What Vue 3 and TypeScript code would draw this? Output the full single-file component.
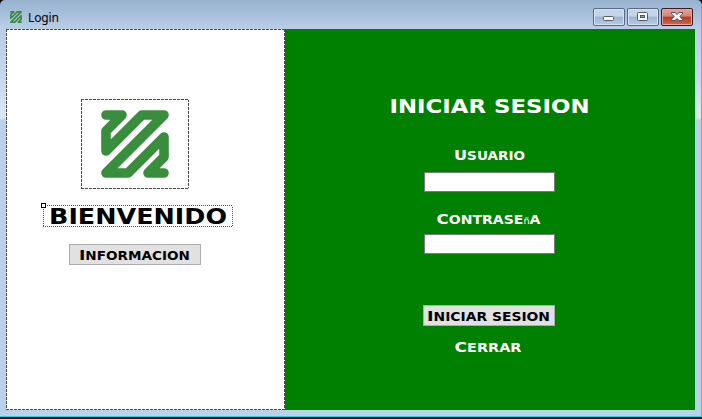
<script setup lang="ts">
import { ref } from 'vue'

const user = ref('')
const password = ref('')
</script>

<template>
  <div class="window">
    <header class="titlebar">
      <svg class="app-icon" width="12" height="12" viewBox="0 0 68 68">
        <path class="logo-line" d="M5 5H21L5 21V41L41 5H63L5 63H27L63 27V47L47 63H63" />
      </svg>
      <span class="title">Login</span>
      <div class="controls">
        <button class="control" aria-label="Minimizar">
          <svg width="30" height="17" viewBox="0 0 30 17">
            <rect x="9.5" y="7.5" width="10" height="4" rx="1" fill="#f8f8f8" stroke="#555c68" />
          </svg>
        </button>
        <button class="control" aria-label="Maximizar">
          <svg width="30" height="17" viewBox="0 0 30 17">
            <rect x="9.5" y="3.5" width="10" height="8" rx="1" fill="#f8f8f8" stroke="#555c68" />
            <rect x="12.5" y="6.5" width="4" height="2" fill="#79a5c9" stroke="#555c68" />
          </svg>
        </button>
        <button class="control close" aria-label="Cerrar ventana">
          <svg width="30" height="17" viewBox="0 0 30 17">
            <path
              d="M9.5 3.5h3.6l1.9 2 1.9-2h3.6v1.4l-2.8 2.6 2.8 2.7v1.3h-3.6l-1.9-2-1.9 2H9.5v-1.3l2.8-2.7-2.8-2.6z"
              fill="#fafafa"
              stroke="#624b55"
            />
          </svg>
        </button>
      </div>
    </header>

    <main class="client">
      <section class="welcome dashed">
        <div class="picture dashed">
          <svg width="68" height="68" viewBox="0 0 68 68">
            <path class="logo-line" d="M5 5H21L5 21V41L41 5H63L5 63H27L63 27V47L47 63H63" />
          </svg>
        </div>
        <div class="welcome-label">
          <i class="handle"></i>
          <svg class="lettering" width="180" height="20">
            <text x="1" y="17.5" font-size="22" textLength="178" lengthAdjust="spacingAndGlyphs">BIENVENIDO</text>
          </svg>
        </div>
        <button class="btn info">
          <svg class="lettering" width="112" height="17">
            <text x="0" y="13" font-size="14.5" textLength="111" lengthAdjust="spacingAndGlyphs">I<tspan class="small">nformacion</tspan></text>
          </svg>
        </button>
      </section>

      <form class="login" @submit.prevent>
        <svg class="lettering heading" width="200" height="20">
          <text x="0.5" y="17" font-size="19.2" textLength="200" lengthAdjust="spacingAndGlyphs">INICIAR SESION</text>
        </svg>
        <svg class="lettering user-label" width="71" height="16">
          <text x="0" y="13" font-size="13.7" textLength="71" lengthAdjust="spacingAndGlyphs">U<tspan class="small">suario</tspan></text>
        </svg>
        <input v-model="user" class="field" type="text" aria-label="Usuario" />
        <svg class="lettering password-label" width="104" height="16">
          <text x="0.5" y="13" font-size="13.7" textLength="104" lengthAdjust="spacingAndGlyphs">C<tspan class="small">ontrase</tspan><tspan class="fallback">ñ</tspan><tspan class="small">a</tspan></text>
        </svg>
        <input v-model="password" class="field" type="password" aria-label="Contraseña" />
        <button class="btn enter">
          <svg class="lettering" width="123" height="17">
            <text x="0" y="13" font-size="14.5" textLength="123" lengthAdjust="spacingAndGlyphs">I<tspan class="small">niciar sesion</tspan></text>
          </svg>
        </button>
        <svg class="lettering exit" width="67" height="16">
          <text x="0.5" y="13" font-size="13.7" textLength="67" lengthAdjust="spacingAndGlyphs">C<tspan class="small">errar</tspan></text>
        </svg>
      </form>
    </main>
  </div>
</template>

<style>
body {
  margin: 0;
  overflow: hidden;
  background: #0a0a0e;
}
</style>

<style scoped>
.window {
  box-sizing: border-box;
  width: 702px;
  height: 417px;
  padding: 0 6px 0 6px;
  border-right: 1px solid #39c8dc;
  border-bottom: 1px solid #25cfe0;
  border-radius: 5px 5px 0 0;
  background: linear-gradient(#98b2cf 0, #a5bdd9 12px, #b9cee6 29px, #c5d7ec 75px, #dce8f5 118px, #b9d1ea 120px);
}
.titlebar {
  display: flex;
  height: 29px;
}
.app-icon {
  margin: 11px 0 0 4px;
}
.logo-line {
  fill: none;
  stroke: #388e3c;
  stroke-width: 9.6;
  stroke-linecap: round;
  stroke-linejoin: round;
}
.title {
  margin: 9px 0 0 6px;
  font: 12px/17px "Noto Sans", "Open Sans", sans-serif;
  letter-spacing: -0.15px;
  color: #000;
}
.controls {
  display: flex;
  gap: 2px;
  margin: 8px 2px 0 auto;
}
.control {
  display: block;
  box-sizing: border-box;
  width: 32px;
  height: 18px;
  padding: 0;
  border: 1px solid #596b86;
  border-radius: 2px;
  background: linear-gradient(#c4d5e9 0 45%, #9bb4d2 50%, #b5cce5);
  box-shadow: inset 0 0 0 1px #d4e2f1;
}
.control svg {
  display: block;
}
.close {
  border-color: #481523;
  background: linear-gradient(#dfa49b 0, #d28576 45%, #b73b27 50%, #cc6a50);
  box-shadow: inset 0 0 0 1px #e0a79e;
}
.client {
  display: grid;
  grid-template-columns: 279px 410px;
  height: 381px;
}
.dashed {
  background:
    repeating-linear-gradient(90deg, #48484c 0 3px, #fff 3px 4px) top / 100% 1px no-repeat,
    repeating-linear-gradient(90deg, #48484c 0 3px, #fff 3px 4px) bottom / 100% 1px no-repeat,
    repeating-linear-gradient(#48484c 0 3px, #fff 3px 4px) left / 1px 100% no-repeat,
    repeating-linear-gradient(#48484c 0 3px, #fff 3px 4px) right / 1px 100% no-repeat,
    #fff;
}
.picture {
  display: flex;
  align-items: center;
  justify-content: center;
  width: 108px;
  height: 90px;
  margin: 70px 0 0 75px;
}
.welcome {
  display: flex;
  flex-direction: column;
}
.welcome-label {
  position: relative;
  box-sizing: border-box;
  width: 190px;
  height: 22px;
  margin: 16px 0 0 37px;
  padding: 1px 0 0 5px;
  background:
    repeating-linear-gradient(90deg, #555 0 1px, #fff 1px 2px) top / 100% 1px no-repeat,
    repeating-linear-gradient(90deg, #555 0 1px, #fff 1px 2px) bottom / 100% 1px no-repeat,
    repeating-linear-gradient(#555 0 1px, #fff 1px 2px) left / 1px 100% no-repeat,
    repeating-linear-gradient(#555 0 1px, #fff 1px 2px) right / 1px 100% no-repeat;
}
.handle {
  position: absolute;
  top: -2px;
  left: -2px;
  width: 3px;
  height: 3px;
  border: 1px solid #000;
  background: #fff;
}
.lettering {
  display: block;
  overflow: visible;
  font-family: "DejaVu Sans", sans-serif;
  font-weight: 700;
  fill: currentColor;
}
.small {
  font-size: 11.5px;
  text-transform: uppercase;
}
.fallback {
  font-size: 8px;
  font-weight: 400;
}
.btn {
  box-sizing: border-box;
  height: 21px;
  padding: 1px 0 0;
  border: 1px solid #adadad;
  background: #e1e1e1;
  color: #000;
}
.info {
  width: 132px;
  margin: 17px 0 0 63px;
  padding-left: 9px;
}
.login {
  display: flex;
  flex-direction: column;
  align-items: flex-start;
  background: #008000;
  color: #fff;
}
.heading {
  margin: 67px 0 0 104px;
}
.user-label {
  margin: 31px 0 0 169px;
}
.field {
  box-sizing: border-box;
  width: 131px;
  height: 20px;
  margin: 9px 0 0 139px;
  padding: 0 3px;
  border: 1px solid #7a7a7a;
  outline: 0;
  background: #fff;
}
.password-label {
  margin: 19px 0 0 151px;
}
.password-label + .field {
  margin-top: 7px;
}
.enter {
  width: 132px;
  margin: 51px 0 0 138px;
  padding-left: 3px;
}
.exit {
  margin: 13px 0 0 169px;
}
</style>
